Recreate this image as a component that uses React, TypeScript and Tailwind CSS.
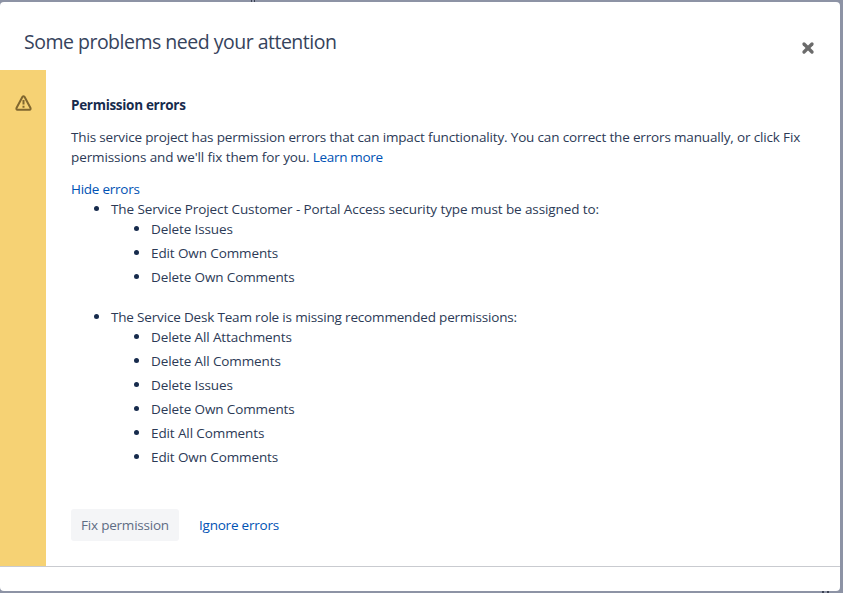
import { X } from 'lucide-react'

const problems = [
    {
        title: 'The Service Project Customer - Portal Access security type must be assigned to:',
        tracking: 'tracking-[-0.1px]',
        items: ['Delete Issues', 'Edit Own Comments', 'Delete Own Comments'],
    },
    {
        title: 'The Service Desk Team role is missing recommended permissions:',
        tracking: 'tracking-[-0.175px]',
        items: [
            'Delete All Attachments',
            'Delete All Comments',
            'Delete Issues',
            'Delete Own Comments',
            'Edit All Comments',
            'Edit Own Comments',
        ],
    },
]

function WarningIcon() {
    return (
        <svg className="h-4 w-[17px]" viewBox="0 0 17 16" fill="none" stroke="#80672f" strokeWidth="2" strokeLinejoin="round">
            <path d="M7.5 1.8 L1.5 13 Q1 14.6 2.5 14.8 H14.5 Q16 14.6 15.5 13 L9.5 1.8 Q8.5 0.5 7.5 1.8 Z" />
            <path d="M8.5 5 V9.4 M8.5 10.8 V12.8" />
        </svg>
    )
}

function Bullet() {
    return <span className="mt-[7px] mr-3 h-[5px] w-[5px] shrink-0 rounded-full bg-[#172b4d]" />
}

export default function App() {
    return (
        <div className="relative h-[593px] w-[843px] overflow-hidden bg-[#8d93a5] pt-0.5 font-['Open_Sans','Noto_Sans',sans-serif] text-[13.5px] leading-5 text-[#2c3a56]">
            {/* Slivers of the page behind the dialog */}
            <div className="absolute top-0 left-[251px] flex gap-0.5">
                <span className="h-0.5 w-px bg-[#3c4254]" />
                <span className="h-0.5 w-px bg-[#3c4254]" />
            </div>
            <div className="absolute right-[14px] bottom-0 flex gap-[3px]">
                <span className="h-0.5 w-0.5 bg-[#3c4254]" />
                <span className="h-0.5 w-0.5 bg-[#3c4254]" />
            </div>

            <div className="flex h-[589px] w-[840px] flex-col rounded-[4px] bg-white">
                <header className="flex h-[68px] shrink-0 items-start justify-between pt-[26px] pr-[24px] pl-6">
                    <h1 className="text-[19.5px] leading-7 tracking-[-0.5px] whitespace-nowrap text-[#36435c]">Some problems need your attention</h1>
                    <button aria-label="Close" className="mt-[12px] text-[#6b6b6b]">
                        <X size={16} strokeWidth={5} />
                    </button>
                </header>

                {/* Warning panel */}
                <div className="flex h-[496px] shrink-0">
                    <div className="flex w-[46px] justify-center bg-[#f6d274] pt-[25px]">
                        <WarningIcon />
                    </div>
                    <div className="flex-1 pt-[25px] pl-[25px] whitespace-nowrap">
                        <h2 className="font-bold tracking-[-0.3px] text-[#172b4d]">Permission errors</h2>
                        <p className="mt-3">
                            <span className="tracking-[-0.16px]">
                                This service project has permission errors that can impact functionality. You can correct the errors manually, or click Fix
                            </span>
                            <br />
                            <span className="tracking-[-0.1px]">permissions and we'll fix them for you. </span>
                            <a className="tracking-[-0.33px] text-[#0052b4]">Learn more</a>
                        </p>
                        <a className="mt-3 block tracking-[-0.25px] text-[#0052b4]">Hide errors</a>
                        <ul className="flex flex-col gap-5 pl-[23px]">
                            {problems.map((problem) => (
                                <li key={problem.title}>
                                    <div className="flex">
                                        <Bullet />
                                        <span className={problem.tracking}>{problem.title}</span>
                                    </div>
                                    <ul className="flex flex-col gap-1 pl-10 tracking-[-0.11px]">
                                        {problem.items.map((item) => (
                                            <li key={item} className="flex">
                                                <Bullet />
                                                <span>{item}</span>
                                            </li>
                                        ))}
                                    </ul>
                                </li>
                            ))}
                        </ul>
                        <div className="mt-[42px] flex gap-5 tracking-[-0.22px]">
                            <button className="h-8 w-[108px] rounded-[3px] bg-[#f4f5f7] text-[#5e6c84]">Fix permission</button>
                            <button className="text-[#0052b4]">Ignore errors</button>
                        </div>
                    </div>
                </div>

                <footer className="border-t border-[#c9cbd0]" />
            </div>
        </div>
    )
}
